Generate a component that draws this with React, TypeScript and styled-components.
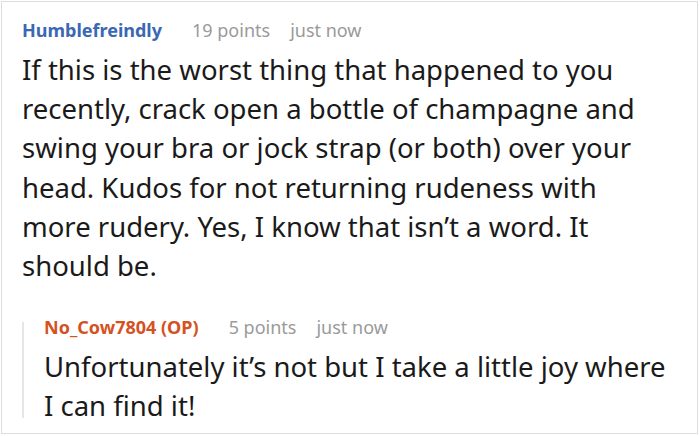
import React from "react";
import styled, { createGlobalStyle } from "styled-components";

const GlobalStyle = createGlobalStyle`
  html, body {
    margin: 0;
    padding: 0;
    background: #ffffff;
  }
  body {
    font-family: "Noto Sans", "Open Sans", sans-serif;
  }
`;

const Frame = styled.div`
  box-sizing: border-box;
  margin: 1px;
  width: 697px;
  height: 433px;
  border: 1px solid #dddddd;
  padding: 13px 27px 0 20px;
  overflow: hidden;
`;

const Comment = styled.div`
  display: flex;
  flex-direction: column;
`;

const Meta = styled.div`
  display: flex;
  align-items: baseline;
  gap: 20px;
  margin-bottom: 5px;
  font-size: 18px;
  line-height: 30px;
`;

const Author = styled.span<{ $op?: boolean }>`
  font-weight: 700;
  color: ${p => (p.$op ? "#d4521f" : "#3a68b4")};
  margin-right: 10px;
`;

const Muted = styled.span`
  color: #9a9a9a;
`;

const Body = styled.p`
  margin: 0;
  font-size: 27.5px;
  line-height: 39.2px;
  color: #1a1a1a;
`;

const Replies = styled.div`
  position: relative;
  margin-top: 27px;
  padding-left: 22px;

  &::before {
    content: "";
    position: absolute;
    left: 0;
    top: 10px;
    bottom: 8px;
    width: 2px;
    background: #e6e6e6;
  }
`;

export default function App() {
  return (
    <>
      <GlobalStyle />
      <Frame>
        <Comment>
          <Meta>
            <Author>Humblefreindly</Author>
            <Muted>19 points</Muted>
            <Muted>just now</Muted>
          </Meta>
          <Body>
            If this is the worst thing that happened to you recently, crack
            open a bottle of champagne and swing your bra or jock strap (or
            both) over your head. Kudos for not returning rudeness with more
            rudery. Yes, I know that isn’t a word. It should be.
          </Body>
          <Replies>
            <Comment>
              <Meta>
                <Author $op>No_Cow7804 (OP)</Author>
                <Muted>5 points</Muted>
                <Muted>just now</Muted>
              </Meta>
              <Body>
                Unfortunately it’s not but I take a little joy where I can
                find it!
              </Body>
            </Comment>
          </Replies>
        </Comment>
      </Frame>
    </>
  );
}
